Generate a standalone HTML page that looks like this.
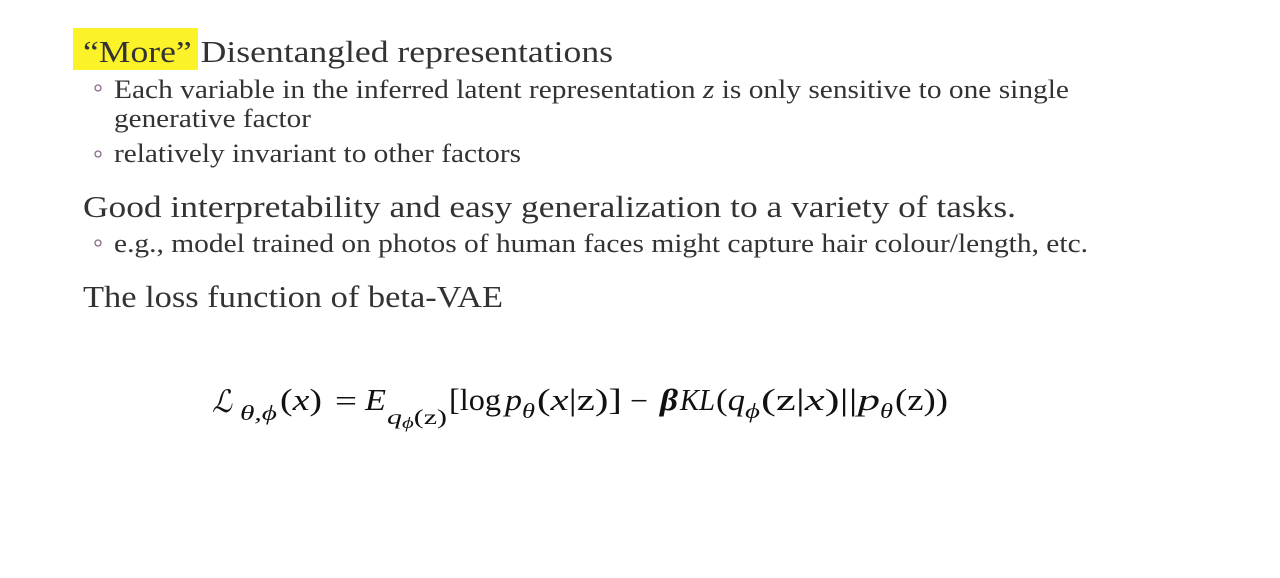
<!DOCTYPE html>
<html><head><meta charset="utf-8"><style>
html,body{margin:0;padding:0;background:#fff;width:1280px;height:578px;overflow:hidden}
svg{display:block}
.h{font-family:"Liberation Serif",serif;font-size:31px;fill:#333}
.b{font-family:"Liberation Serif",serif;font-size:26px;fill:#333}
.m{font-family:"Liberation Serif",serif;font-size:31px;fill:#111}
.mi{font-family:"Liberation Serif",serif;font-style:italic;font-size:31px;fill:#111}
.s{font-family:"Liberation Serif",serif;font-style:italic;font-size:21px;fill:#111}
</style></head><body>
<svg width="1280" height="578" xmlns="http://www.w3.org/2000/svg">
<rect x="73" y="28" width="125" height="42" fill="#fbf22a"/>
<text class="h" x="83" y="62" textLength="530" lengthAdjust="spacingAndGlyphs">“More” Disentangled representations</text>
<circle cx="98" cy="88" r="3" fill="none" stroke="#8a6a8a" stroke-width="1.3"/>
<text class="b" x="114" y="98" textLength="955" lengthAdjust="spacingAndGlyphs">Each variable in the inferred latent representation <tspan font-style="italic">z</tspan> is only sensitive to one single</text>
<text class="b" x="114" y="127" textLength="197" lengthAdjust="spacingAndGlyphs">generative factor</text>
<circle cx="98" cy="154" r="3" fill="none" stroke="#8a6a8a" stroke-width="1.3"/>
<text class="b" x="114" y="162" textLength="407" lengthAdjust="spacingAndGlyphs">relatively invariant to other factors</text>
<text class="h" x="83" y="217" textLength="933" lengthAdjust="spacingAndGlyphs">Good interpretability and easy generalization to a variety of tasks.</text>
<circle cx="98" cy="243" r="3" fill="none" stroke="#8a6a8a" stroke-width="1.3"/>
<text class="b" x="114" y="252" textLength="974" lengthAdjust="spacingAndGlyphs">e.g., model trained on photos of human faces might capture hair colour/length, etc.</text>
<text class="h" x="83" y="307" textLength="420" lengthAdjust="spacingAndGlyphs">The loss function of beta-VAE</text>

<text class="mi" x="212" y="412" font-size="36" textLength="20" lengthAdjust="spacingAndGlyphs">ℒ</text>
<text class="s" x="240" y="420" textLength="37" lengthAdjust="spacingAndGlyphs">θ,ϕ</text>
<text class="m" x="280" y="410" textLength="42" lengthAdjust="spacingAndGlyphs">(<tspan font-style="italic">x</tspan>)</text>
<text class="m" x="335" y="411" font-size="38" textLength="22" lengthAdjust="spacingAndGlyphs">=</text>
<text class="mi" x="365" y="410" textLength="21" lengthAdjust="spacingAndGlyphs">E</text>
<text class="s" x="387" y="424" textLength="60" lengthAdjust="spacingAndGlyphs">q<tspan font-size="16" dy="4">ϕ</tspan><tspan font-style="normal" dy="-4">(z)</tspan></text>
<text class="m" x="449" y="410" textLength="52" lengthAdjust="spacingAndGlyphs">[log</text>
<text class="mi" x="505" y="410" textLength="17" lengthAdjust="spacingAndGlyphs">p</text>
<text class="s" x="522" y="418" textLength="13" lengthAdjust="spacingAndGlyphs">θ</text>
<text class="m" x="537" y="410" textLength="85" lengthAdjust="spacingAndGlyphs">(<tspan font-style="italic">x</tspan>|z)]</text>
<text class="m" x="630" y="411" font-size="38" textLength="18" lengthAdjust="spacingAndGlyphs">−</text>
<text class="mi" x="660" y="410" font-weight="bold" textLength="18" lengthAdjust="spacingAndGlyphs">β</text>
<text class="mi" x="680" y="410" textLength="35" lengthAdjust="spacingAndGlyphs">KL</text>
<text class="m" x="716" y="410" textLength="29" lengthAdjust="spacingAndGlyphs">(<tspan font-style="italic">q</tspan></text>
<text class="s" x="745" y="418" textLength="15" lengthAdjust="spacingAndGlyphs">ϕ</text>
<text class="m" x="761" y="410" textLength="119" lengthAdjust="spacingAndGlyphs">(z|<tspan font-style="italic">x</tspan>)||<tspan font-style="italic">p</tspan></text>
<text class="s" x="880" y="418" textLength="13" lengthAdjust="spacingAndGlyphs">θ</text>
<text class="m" x="895" y="410" textLength="53" lengthAdjust="spacingAndGlyphs">(z))</text>
</svg>
</body></html>
